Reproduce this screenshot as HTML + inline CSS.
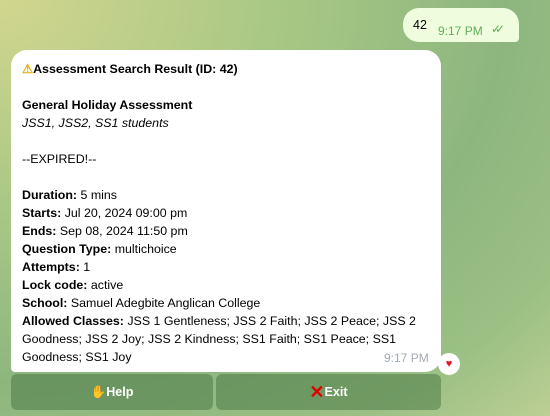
<!DOCTYPE html>
<html><head><style>
body{margin:0;width:550px;height:416px;overflow:hidden;font-family:"Liberation Sans",sans-serif;
background:radial-gradient(ellipse at 0% 0%,#d2d68e 0%,#a9c885 35%,#8db67f 65%,#9cc084 85%,#bccf94 100%);position:relative}
.out{position:absolute;left:403px;top:8px;width:116px;height:34px;background:#effdde;border-radius:16px 16px 4px 16px;}
.out .n{position:absolute;left:10px;top:10px;font-size:12.5px;color:#000}
.out .t{position:absolute;left:35px;top:16px;font-size:12px;color:#5fae5a}
.out .c{position:absolute;left:88px;top:14px;font-size:12px;color:#5fae5a;letter-spacing:-6px}
.bub{position:absolute;left:11px;top:50px;width:430px;height:322px;background:#fff;border-radius:16px 16px 16px 4px}
.txt{position:absolute;left:11px;top:10px;width:410px;font-size:12.4px;line-height:18px;color:#000;white-space:nowrap}
.tm{position:absolute;left:373px;top:301px;font-size:12px;color:#a0aab4}
.heart{position:absolute;left:438px;top:353px;width:22px;height:22px;border-radius:50%;background:#fff;text-align:center;line-height:22px;font-size:11px;color:#e0152a}
.btn{position:absolute;top:374px;height:36px;background:rgba(70,115,65,.5);border-radius:6px;color:#fff;font-weight:bold;font-size:12.6px;text-align:center;line-height:36px}
</style></head><body>
<div class="out"><span class="n">42</span><span class="t">9:17 PM</span><span class="c">✓✓</span></div>
<div class="bub"><div class="txt">
<b><span style="color:#e8b000">⚠</span>Assessment Search Result (ID: 42)</b><br><br>
<b>General Holiday Assessment</b><br><i>JSS1, JSS2, SS1 students</i><br><br>
--EXPIRED!--<br><br>
<b>Duration:</b> 5 mins<br>
<b>Starts:</b> Jul 20, 2024 09:00 pm<br>
<b>Ends:</b> Sep 08, 2024 11:50 pm<br>
<b>Question Type:</b> multichoice<br>
<b>Attempts:</b> 1<br>
<b>Lock code:</b> active<br>
<b>School:</b> Samuel Adegbite Anglican College<br>
<b>Allowed Classes:</b> JSS 1 Gentleness; JSS 2 Faith; JSS 2 Peace; JSS 2<br>Goodness; JSS 2 Joy; JSS 2 Kindness; SS1 Faith; SS1 Peace; SS1<br>Goodness; SS1 Joy
</div><span class="tm">9:17 PM</span></div>
<div class="heart">♥</div>
<div class="btn" style="left:11px;width:202px"><span style="color:#a0653a">✋</span>Help</div>
<div class="btn" style="left:216px;width:225px"><span style="color:#e00000;font-size:18px;vertical-align:-2px">✕</span>Exit</div>
</body></html>
